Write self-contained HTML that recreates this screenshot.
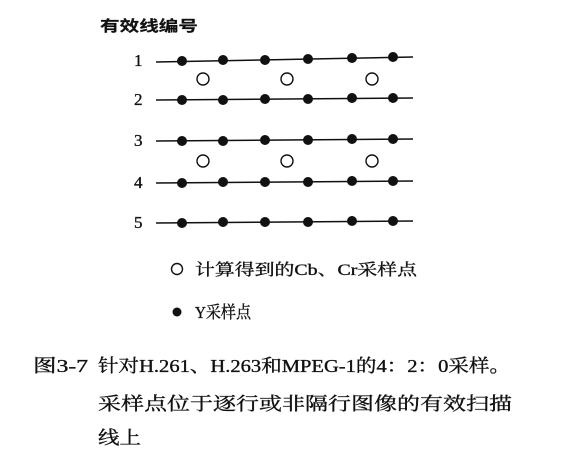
<!DOCTYPE html>
<html><head><meta charset="utf-8"><style>
html,body{margin:0;padding:0;background:#fff;width:562px;height:461px;overflow:hidden}
svg{display:block}
text{font-family:"Liberation Serif","Noto Serif CJK SC","Noto Sans CJK SC",serif;fill:#111;stroke:#111;stroke-width:0.35}
</style></head><body>
<svg width="562" height="461" viewBox="0 0 562 461" xmlns="http://www.w3.org/2000/svg">
<text x="100" y="31" font-size="15" textLength="98" lengthAdjust="spacingAndGlyphs" style="font-family:'Noto Sans CJK SC',sans-serif;font-weight:600;stroke-width:0.2">有效线编号</text>
<g font-size="17">
<text x="134" y="66">1</text>
<text x="134" y="105">2</text>
<text x="134" y="146">3</text>
<text x="134" y="188">4</text>
<text x="134" y="228">5</text>
</g>
<g stroke="#111" stroke-width="1.5">
<line x1="156" y1="62" x2="413" y2="57"/>
<line x1="156" y1="100" x2="413" y2="98"/>
<line x1="156" y1="141" x2="413" y2="139"/>
<line x1="156" y1="183" x2="413" y2="181"/>
<line x1="156" y1="223" x2="413" y2="221"/>
</g>
<g fill="#111">
<circle cx="182" cy="61" r="5"/><circle cx="223" cy="60" r="5"/><circle cx="265" cy="60" r="5"/><circle cx="308" cy="59" r="5"/><circle cx="352" cy="58" r="5"/><circle cx="393" cy="57" r="5"/>
<circle cx="182" cy="100" r="5"/><circle cx="223" cy="100" r="5"/><circle cx="265" cy="99" r="5"/><circle cx="308" cy="99" r="5"/><circle cx="352" cy="98" r="5"/><circle cx="393" cy="98" r="5"/>
<circle cx="182" cy="141" r="5"/><circle cx="223" cy="141" r="5"/><circle cx="265" cy="140" r="5"/><circle cx="308" cy="140" r="5"/><circle cx="352" cy="139" r="5"/><circle cx="393" cy="139" r="5"/>
<circle cx="182" cy="183" r="5"/><circle cx="223" cy="182" r="5"/><circle cx="265" cy="182" r="5"/><circle cx="308" cy="182" r="5"/><circle cx="352" cy="181" r="5"/><circle cx="393" cy="181" r="5"/>
<circle cx="182" cy="223" r="5"/><circle cx="223" cy="222" r="5"/><circle cx="265" cy="222" r="5"/><circle cx="308" cy="222" r="5"/><circle cx="352" cy="221" r="5"/><circle cx="393" cy="221" r="5"/>
<circle cx="177" cy="312" r="4.5"/>
</g>
<g fill="none" stroke="#111" stroke-width="1.4">
<circle cx="203" cy="79" r="6"/><circle cx="287" cy="79" r="6"/><circle cx="372" cy="79" r="6"/>
<circle cx="203" cy="161" r="6"/><circle cx="287" cy="161" r="6"/><circle cx="372" cy="161" r="6"/>
<circle cx="177" cy="269" r="5.5"/>
</g>
<text x="195" y="275" font-size="16" textLength="222" lengthAdjust="spacingAndGlyphs">计算得到的Cb、Cr采样点</text>
<text x="195" y="318" font-size="17" textLength="56" lengthAdjust="spacingAndGlyphs">Y采样点</text>
<g font-size="18">
<text x="33" y="372" textLength="55" lengthAdjust="spacingAndGlyphs">图3-7</text>
<text x="98" y="372" textLength="412" lengthAdjust="spacingAndGlyphs">针对H.261、H.263和MPEG-1的4：2：0采样。</text>
<text x="98" y="410" textLength="414" lengthAdjust="spacingAndGlyphs">采样点位于逐行或非隔行图像的有效扫描</text>
<text x="98" y="444" textLength="43" lengthAdjust="spacingAndGlyphs">线上</text>
</g>
</svg>
</body></html>
